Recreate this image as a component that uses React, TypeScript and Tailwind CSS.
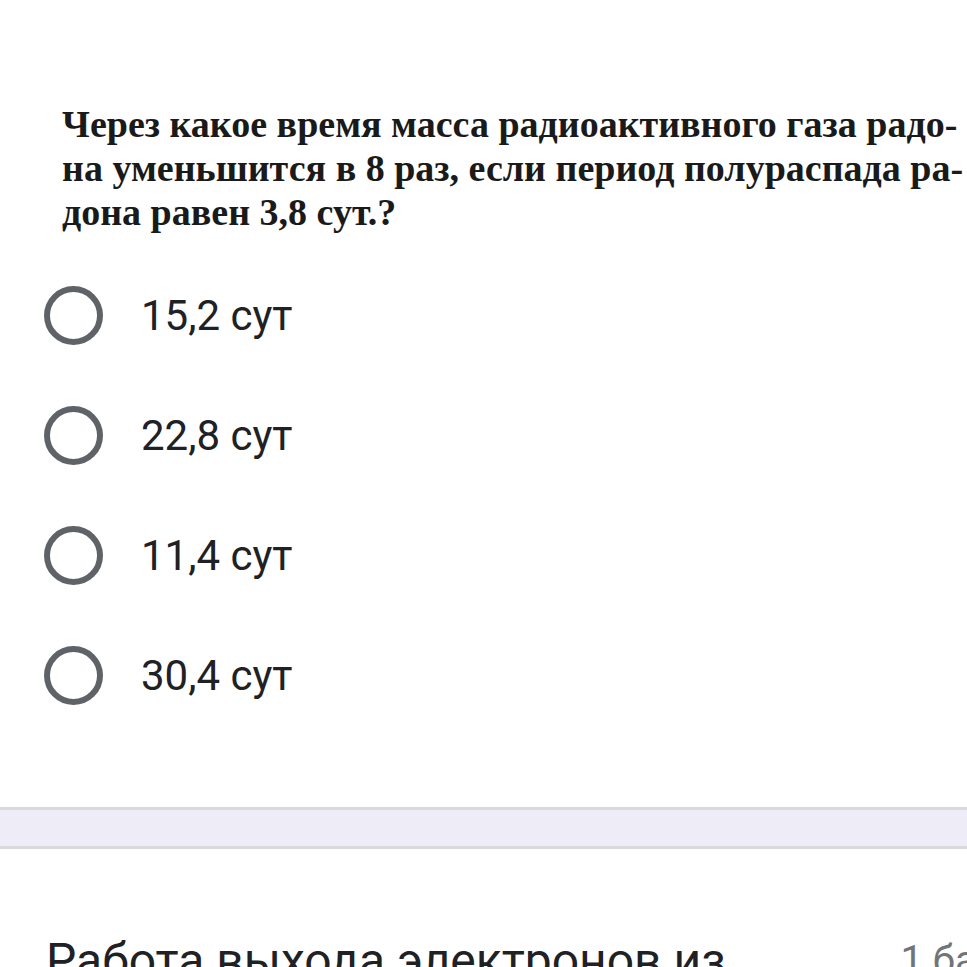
export default function App() {
  const options = ["15,2 сут", "22,8 сут", "11,4 сут", "30,4 сут"];

  return (
    <div className="w-[967px] h-[967px] overflow-hidden bg-white flex flex-col">
      {/* question image text */}
      <div className="shrink-0 pt-[102px] pl-[62px] font-['Liberation_Serif',serif] font-bold text-[38px] leading-[44px] text-[#1a1a1a] whitespace-nowrap">
        <div>Через какое время масса радиоактивного газа радо-</div>
        <div>на уменьшится в 8 раз, если период полураспада ра-</div>
        <div>дона равен 3,8 сут.?</div>
      </div>

      <div className="shrink-0 mt-[51px] flex flex-col gap-[60px] pl-[44px] font-['Roboto',sans-serif]">
        {options.map((o) => (
          <label key={o} className="flex items-center h-[60px] cursor-pointer">
            <span className="w-[59px] h-[59px] rounded-full border-[6px] border-[#5f6368] shrink-0" />
            <span className="ml-[38px] text-[42px] text-[#202124]">{o}</span>
          </label>
        ))}
      </div>

      <div className="shrink-0 mt-[102px] h-[42px] bg-[#eeecf6] border-y-[3px] border-[#dadadd]" />

      <div className="shrink-0 mt-[84px] flex justify-between pl-[46px] font-['Roboto',sans-serif]">
        <span className="text-[48px] leading-[56px] text-[#202124]">Работа выхода электронов из</span>
        <span className="text-[40px] leading-[56px] text-[#70757a] mr-[-56px]">1 балл</span>
      </div>
    </div>
  );
}
